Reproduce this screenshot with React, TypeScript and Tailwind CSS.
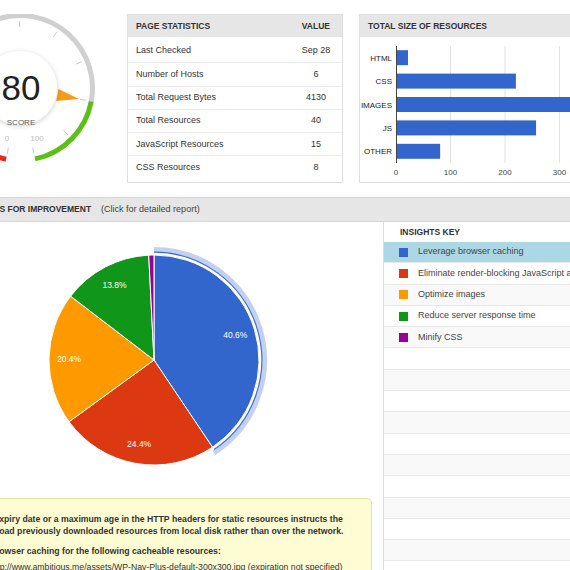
import React from "react";

const stats = [
  ["Last Checked", "Sep 28"],
  ["Number of Hosts", "6"],
  ["Total Request Bytes", "4130"],
  ["Total Resources", "40"],
  ["JavaScript Resources", "15"],
  ["CSS Resources", "8"],
];

const sizes = [
  { label: "HTML", value: 22 },
  { label: "CSS", value: 220 },
  { label: "IMAGES", value: 385 },
  { label: "JS", value: 257 },
  { label: "OTHER", value: 81 },
];

const insights = [
  { label: "Leverage browser caching", color: "#3366cc", pct: 40.6 },
  {
    label: "Eliminate render-blocking JavaScript and CSS in above-the-fold content",
    color: "#dc3912",
    pct: 24.4,
  },
  { label: "Optimize images", color: "#ff9900", pct: 20.4 },
  { label: "Reduce server response time", color: "#109618", pct: 13.8 },
  { label: "Minify CSS", color: "#990099", pct: 0.8 },
];

const polar = (cx: number, cy: number, r: number, deg: number) => {
  const a = (deg * Math.PI) / 180;
  return [cx + r * Math.cos(a), cy + r * Math.sin(a)];
};

const arc = (cx: number, cy: number, r: number, a0: number, a1: number) => {
  const [x0, y0] = polar(cx, cy, r, a0);
  const [x1, y1] = polar(cx, cy, r, a1);
  const large = a1 - a0 > 180 ? 1 : 0;
  return `M${x0} ${y0} A${r} ${r} 0 ${large} 1 ${x1} ${y1}`;
};

function Gauge() {
  const cx = 90;
  const cy = 74;
  const ang = (v: number) => 101 + (337 * v) / 100;
  const needle = ang(80);
  const [tx, ty] = polar(cx, cy, 60, needle);
  const [bx, by] = polar(cx, cy, 38, needle);
  const rad = (needle * Math.PI) / 180;
  const px = -Math.sin(rad) * 6;
  const py = Math.cos(rad) * 6;

  return (
    <svg width="181" height="169" className="block">
      <defs>
        <filter id="innerShadow" x="-50%" y="-50%" width="200%" height="200%">
          <feDropShadow dx="0" dy="1" stdDeviation="2.5" floodColor="#000" floodOpacity="0.22" />
        </filter>
      </defs>
      <path d={arc(cx, cy, 72.5, ang(0), ang(10))} stroke="#e62a1a" strokeWidth="5" fill="none" />
      <path d={arc(cx, cy, 72.5, ang(10), ang(80))} stroke="#d0d0d0" strokeWidth="5" fill="none" />
      <path d={arc(cx, cy, 72.5, ang(80), ang(100))} stroke="#5bbf15" strokeWidth="5" fill="none" />
      {Array.from({ length: 11 }).map((_, k) => {
        const [x0, y0] = polar(cx, cy, 61, ang(k * 10));
        const [x1, y1] = polar(cx, cy, 67, ang(k * 10));
        return <line key={k} x1={x0} y1={y0} x2={x1} y2={y1} stroke="#c9c9c9" strokeWidth="1" />;
      })}
      <polygon
        points={`${bx + px},${by + py} ${bx - px},${by - py} ${tx},${ty}`}
        fill="#f59b16"
      />
      <circle cx={cx} cy={cy} r="37" fill="#fff" filter="url(#innerShadow)" />
      <text x={cx + 1} y={cy + 12} textAnchor="middle" fontSize="35" fill="#222">
        80
      </text>
      <text x={cx + 1} y={cy + 37} textAnchor="middle" fontSize="8" fill="#555">
        SCORE
      </text>
      <text x="77" y="127" textAnchor="middle" fontSize="8" fill="#bdbdbd">
        0
      </text>
      <text x="107" y="127" textAnchor="middle" fontSize="8" fill="#bdbdbd">
        100
      </text>
    </svg>
  );
}

function SizeChart() {
  const x0 = 36;
  const scale = 0.545;
  const top = 9;
  const band = 23.4;
  return (
    <svg width="238" height="145" className="block">
      {[100, 200, 300].map((v) => (
        <line key={v} x1={x0 + v * scale} y1={top} x2={x0 + v * scale} y2={top + band * 5} stroke="#e2e2e2" />
      ))}
      {sizes.map((s, i) => {
        const c = top + band * i + band / 2;
        return (
          <g key={s.label}>
            <rect x={x0} y={c - 7.5} width={s.value * scale} height="15" fill="#3366cc" />
            <text x={x0 - 4} y={c + 3} textAnchor="end" fontSize="8" fill="#222">
              {s.label}
            </text>
          </g>
        );
      })}
      <line x1={x0 + 0.5} y1={top} x2={x0 + 0.5} y2={top + band * 5} stroke="#444" />
      {[0, 100, 200, 300].map((v) => (
        <text key={v} x={x0 + v * scale} y="138" textAnchor="middle" fontSize="8" fill="#444">
          {v}
        </text>
      ))}
    </svg>
  );
}

function Pie() {
  const cx = 224;
  const cy = 138;
  const r = 105;
  let acc = -90;
  const slices = insights.map((it) => {
    const a0 = acc;
    const a1 = acc + (it.pct / 100) * 360;
    acc = a1;
    return { ...it, a0, a1 };
  });
  const sel = slices[0];
  return (
    <svg width="453" height="276" className="block">
      <path d={arc(cx, cy, 110.5, sel.a0, sel.a1 + 1)} stroke="#c3d0ef" strokeWidth="5" fill="none" />
      <path d={arc(cx, cy, 107.8, sel.a0, sel.a1)} stroke="#3f6fd0" strokeWidth="1.2" fill="none" />
      {slices.map((s) => {
        const [x0, y0] = polar(cx, cy, r, s.a0);
        const [x1, y1] = polar(cx, cy, r, s.a1);
        const large = s.a1 - s.a0 > 180 ? 1 : 0;
        return (
          <path
            key={s.label}
            d={`M${cx} ${cy} L${x0} ${y0} A${r} ${r} 0 ${large} 1 ${x1} ${y1} Z`}
            fill={s.color}
            stroke="#fff"
            strokeWidth="1"
          />
        );
      })}
      {slices
        .filter((s) => s.pct >= 5)
        .map((s) => {
          const [lx, ly] = polar(cx, cy, 85, (s.a0 + s.a1) / 2);
          return (
            <text key={s.label} x={lx} y={ly + 3} textAnchor="middle" fontSize="8.5" fill="#fff">
              {s.pct.toFixed(1)}%
            </text>
          );
        })}
    </svg>
  );
}

export default function App() {
  return (
    <div className="w-[570px] h-[570px] overflow-hidden bg-white font-['Liberation_Sans',Arial,sans-serif] text-[#333]">
      <div className="ml-[-70px] w-[760px]">
        <div className="flex gap-4 pt-[14px]">
          <div className="w-[181px] h-[169px] shrink-0">
            <Gauge />
          </div>

          <div className="w-[216px] h-[169px] shrink-0 border border-[#dedede]">
            <div className="h-[22px] bg-[#e6e6e6] flex items-center justify-between pl-[8px] pr-[12px] text-[8.5px] font-bold uppercase text-[#333]">
              <span>Page Statistics</span>
              <span>Value</span>
            </div>
            <div className="pt-[2px]">
              {stats.map(([k, v], i) => (
                <div
                  key={k}
                  className={`h-[23.3px] flex items-center pl-[8px] text-[9px] text-[#333] ${
                    i > 0 ? "border-t border-[#ececec]" : ""
                  }`}
                >
                  <span className="flex-1">{k}</span>
                  <span className="w-[52px] text-center">{v}</span>
                </div>
              ))}
            </div>
          </div>

          <div className="w-[240px] h-[169px] shrink-0 border border-[#dedede]">
            <div className="h-[22px] bg-[#e6e6e6] flex items-center pl-[8px] text-[8.5px] font-bold uppercase text-[#333]">
              Total Size of Resources
            </div>
            <SizeChart />
          </div>
        </div>

        <div className="mt-[14px]">
          <div className="h-[25px] bg-[#e6e6e6] border-y border-[#d8d8d8] flex items-center pl-[35px] text-[#333]">
            <span className="text-[8.5px] font-bold uppercase">Insights for Improvement</span>
            <span className="ml-[10px] text-[9px] text-[#444]">(Click for detailed report)</span>
          </div>

          <div className="flex">
            <div className="w-[453px] shrink-0">
              <Pie />
              <div className="ml-[10px] mr-[11px] rounded-[5px] border border-[#ebe2a2] bg-[#fefcd3] pt-[14px] pb-[12px] pl-[9px] pr-[8px] text-[8.7px] leading-[12px] font-bold text-[#333] whitespace-nowrap">
                <p>
                  Setting an expiry date or a maximum age in the HTTP headers for static resources instructs the
                  <br />
                  browser to load previously downloaded resources from local disk rather than over the network.
                </p>
                <p className="mt-[8px]">Leverage browser caching for the following cacheable resources:</p>
                <ul className="mt-[4px] pl-[40px]">
                  <li className="font-normal">
                    http://www.ambitious.me/assets/WP-Nav-Plus-default-300x300.jpg (expiration not specified)
                  </li>
                </ul>
              </div>
            </div>

            <div className="flex-1 min-w-0 border-l border-[#dcdcdc]">
              <div className="h-[20px] flex items-center pl-[16px] text-[8.5px] font-bold uppercase text-[#333]">
                Insights Key
              </div>
              {insights.map((it, i) => (
                <div
                  key={it.label}
                  className={`h-[21.3px] flex items-center pl-[15px] border-b border-[#e8e8e8] text-[9px] text-[#444] whitespace-nowrap overflow-hidden ${
                    i === 0 ? "bg-[#acd8e6]" : i % 2 === 0 ? "bg-[#f9f9f9]" : "bg-white"
                  }`}
                >
                  <span className="w-[9px] h-[9px] shrink-0" style={{ backgroundColor: it.color }} />
                  <span className="ml-[10px]">{it.label}</span>
                </div>
              ))}
              {Array.from({ length: 10 }).map((_, j) => (
                <div
                  key={j}
                  className={`h-[21.3px] border-b border-[#e8e8e8] ${
                    (j + 5) % 2 === 0 ? "bg-[#f9f9f9]" : "bg-white"
                  }`}
                />
              ))}
            </div>
          </div>
        </div>
      </div>
    </div>
  );
}
